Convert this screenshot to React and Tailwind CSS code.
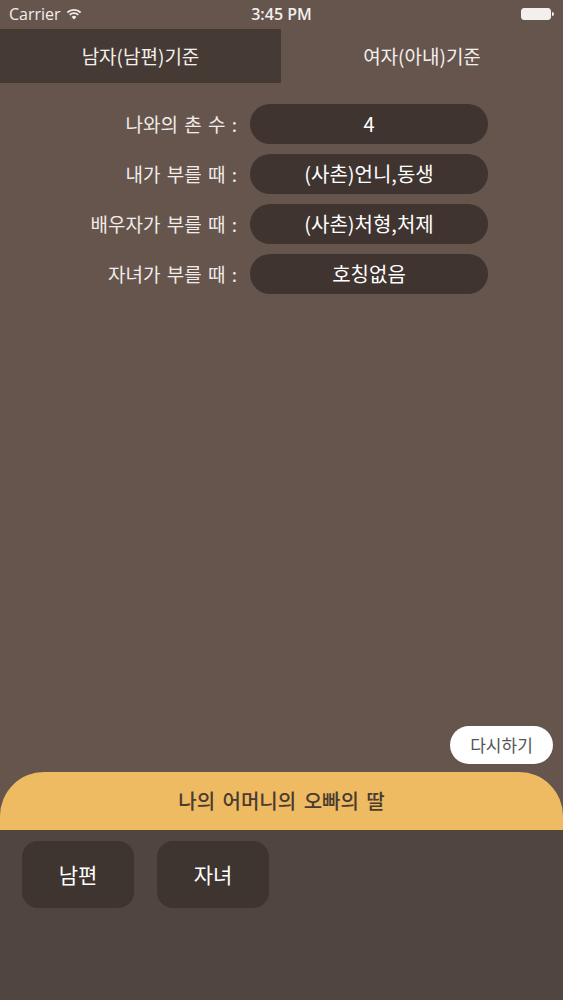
import React from "react";

const FONT = { fontFamily: '"Noto Sans CJK KR", "Noto Sans", sans-serif' };
const SYS = { fontFamily: '"Open Sans", "Noto Sans", sans-serif' };

function StatusBar() {
  return (
    <div className="relative flex h-[28px] items-center justify-between px-[9px] text-[#f3efed]" style={SYS}>
      <div className="flex items-center gap-[5px] text-[16px]">
        <span>Carrier</span>
        <svg width="16" height="12" viewBox="0 0 16 12">
          <path d="M8 11.5 L5.6 8.9 A3.4 3.4 0 0 1 10.4 8.9 Z" fill="#f3efed" />
          <path d="M3.7 6.9 A6.2 6.2 0 0 1 12.3 6.9" stroke="#f3efed" strokeWidth="1.8" fill="none" />
          <path d="M1.4 4.5 A9.4 9.4 0 0 1 14.6 4.5" stroke="#f3efed" strokeWidth="1.8" fill="none" />
        </svg>
      </div>
      <span className="absolute left-1/2 -translate-x-1/2 text-[16px] font-semibold">3:45 PM</span>
      <div className="flex items-center">
        <div className="h-[12px] w-[30px] rounded-[3px] border border-[#f3efed] bg-[#f3efed]" />
        <div className="ml-[1px] h-[4px] w-[2px] rounded-r-sm bg-[#f3efed]" />
      </div>
    </div>
  );
}

function Row({ label, value }) {
  return (
    <div className="flex h-[40px] items-center">
      <div className="w-[240px] pr-[3px] text-right text-[19px] text-[#f1ece9] [word-spacing:2px]">{label}</div>
      <div className="ml-[10px] flex h-[40px] w-[238px] items-center justify-center rounded-full bg-[#3f3430] text-[20px] text-white">
        {value}
      </div>
    </div>
  );
}

export default function App() {
  return (
    <div className="flex h-[1000px] w-[563px] flex-col bg-[#66554d]" style={FONT}>
      <StatusBar />
      <div className="mt-[1px] flex h-[54px]">
        <div className="flex w-[281px] items-center justify-center bg-[#463a35] text-[19px] text-[#f3efed]">
          남자(남편)기준
        </div>
        <div className="flex flex-1 items-center justify-center text-[19px] text-[#f3efed]">
          여자(아내)기준
        </div>
      </div>
      <div className="mt-[21px] flex flex-col gap-[10px]">
        <Row label="나와의 촌 수 :" value="4" />
        <Row label="내가 부를 때 :" value="(사촌)언니,동생" />
        <Row label="배우자가 부를 때 :" value="(사촌)처형,처제" />
        <Row label="자녀가 부를 때 :" value="호칭없음" />
      </div>
      <div className="flex-1" />
      <div className="flex justify-end pr-[10px]">
        <button className="flex h-[38px] w-[103px] items-center justify-center rounded-full bg-white text-[17px] text-[#555]">
          다시하기
        </button>
      </div>
      <div className="mt-[8px] flex h-[58px] items-center justify-center rounded-t-[44px] bg-[#efbb62] text-[20px] font-medium text-[#4a3b30] [word-spacing:3px]">
        나의 어머니의 오빠의 딸
      </div>
      <div className="flex h-[170px] items-start gap-[23px] bg-[#51463f] px-[22px] pt-[11px]">
        <button className="flex h-[67px] w-[112px] items-center justify-center rounded-[16px] bg-[#3e3430] text-[21px] text-white">
          남편
        </button>
        <button className="flex h-[67px] w-[112px] items-center justify-center rounded-[16px] bg-[#3e3430] text-[21px] text-white">
          자녀
        </button>
      </div>
    </div>
  );
}
